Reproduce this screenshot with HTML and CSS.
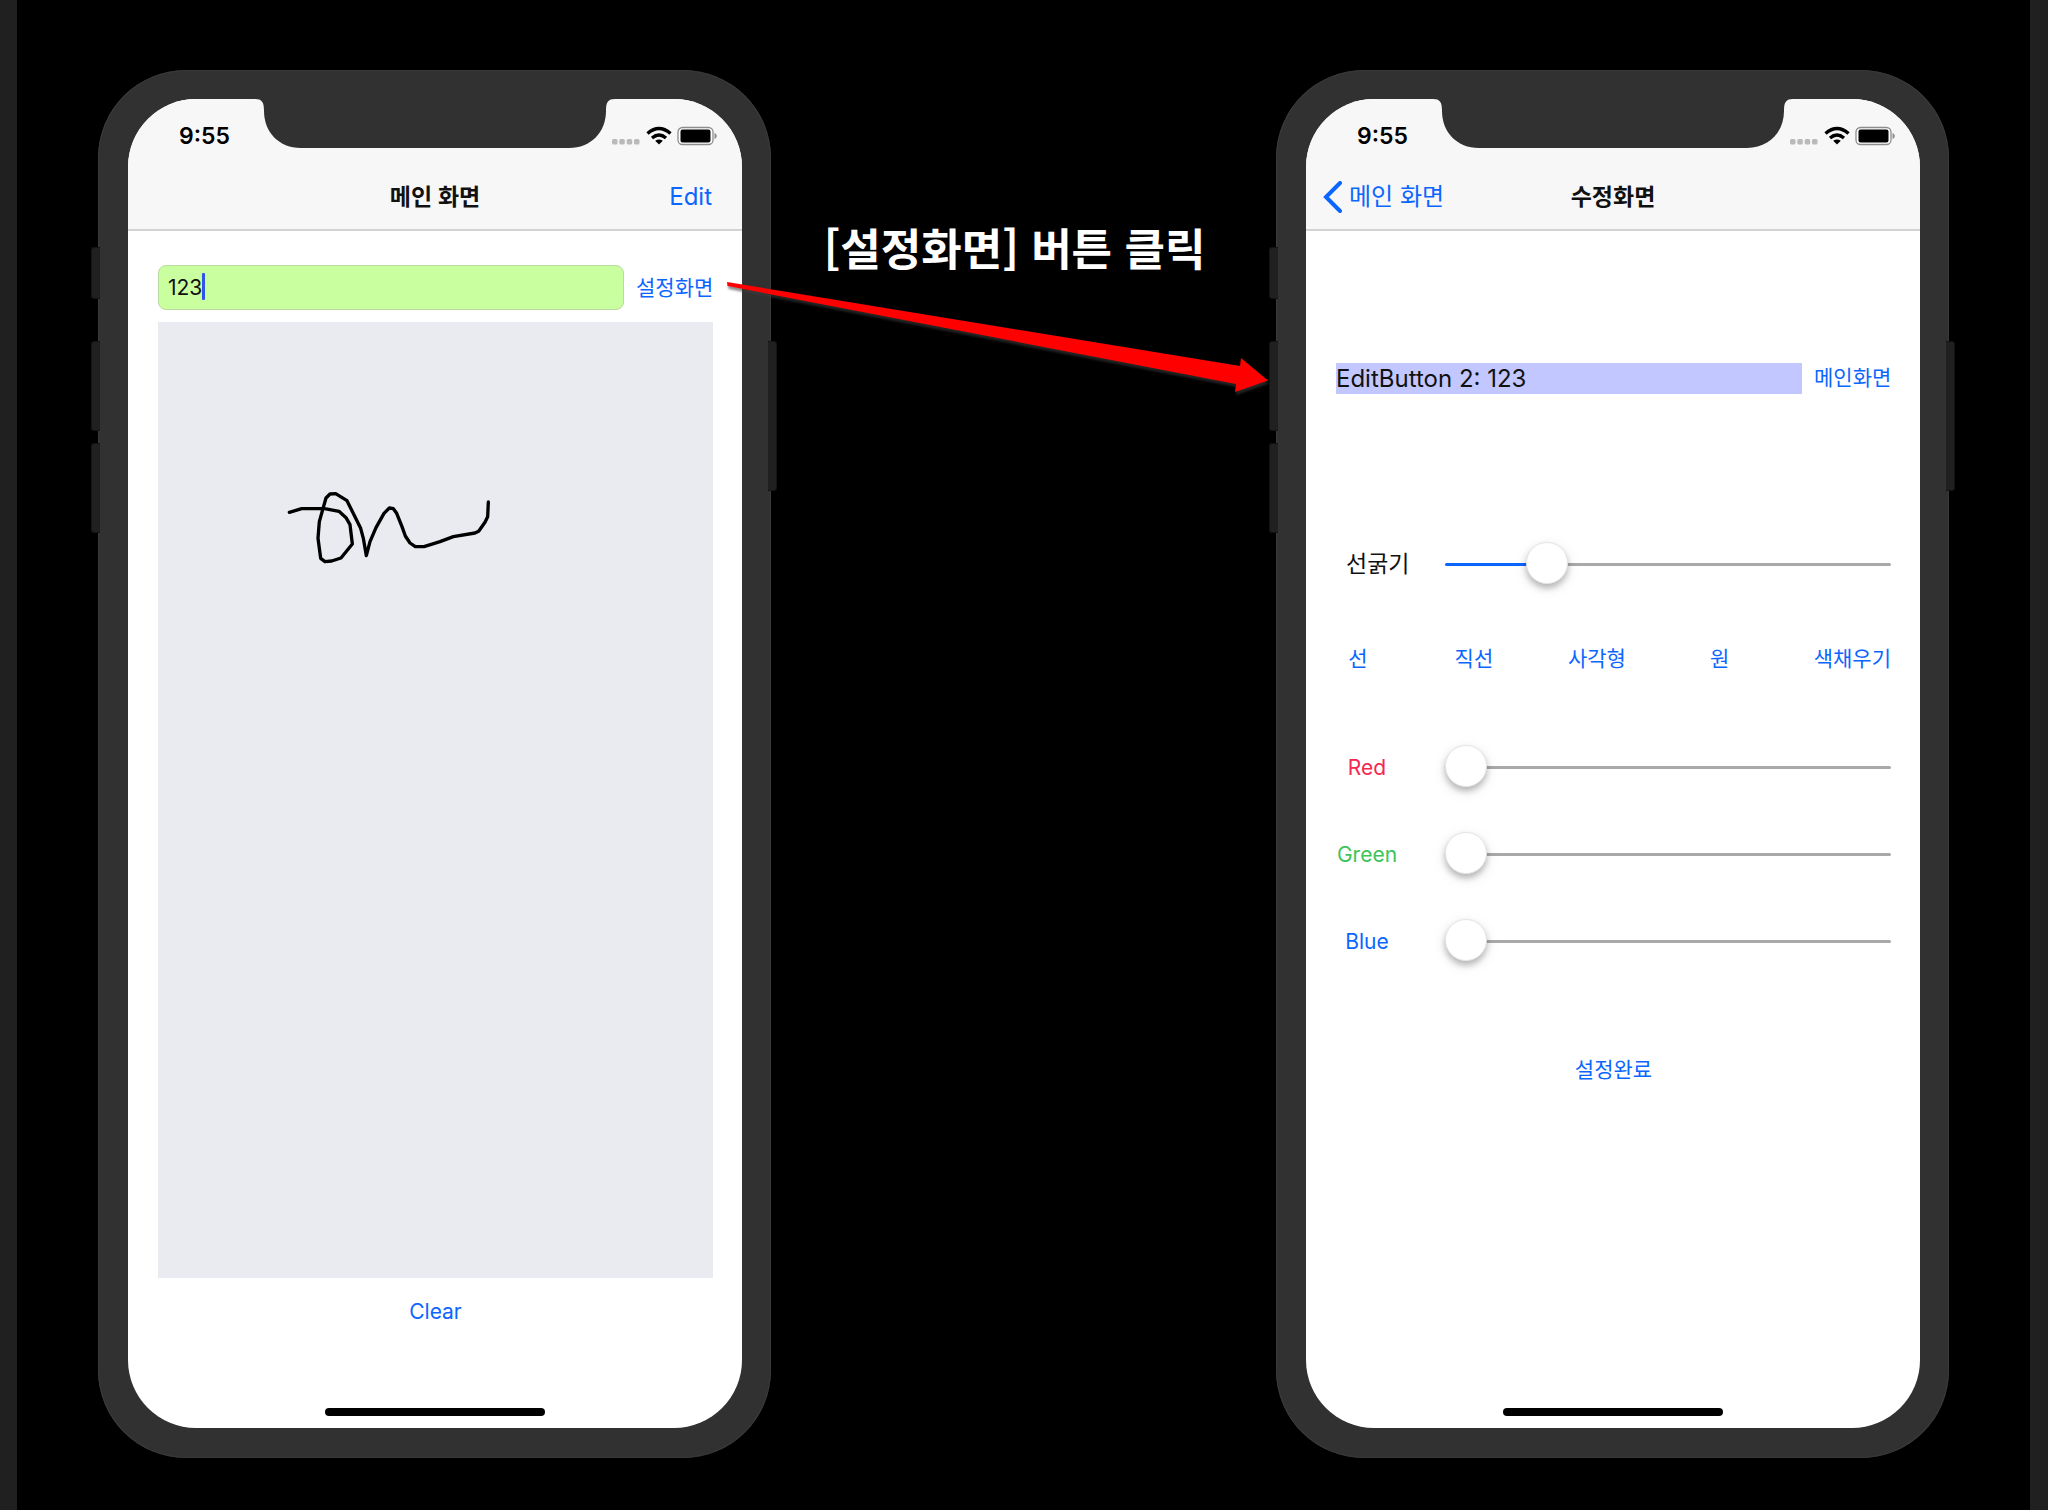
FILE: index.html
```html
<!DOCTYPE html>
<html lang="ko">
<head>
<meta charset="utf-8">
<meta name="viewport" content="width=device-width, initial-scale=1">
<title>메인 화면 / 수정화면</title>
<link rel="stylesheet" href="styles.css">
</head>
<body>
<svg class="symbols" aria-hidden="true">
  <symbol id="notch" viewBox="0 0 360 49">
    <path d="M0 0C7 0 9 3 9 12C9 33 24 49 46 49H314C336 49 351 33 351 12C351 3 353 0 360 0Z" fill="#313131"/>
  </symbol>
  <symbol id="status" viewBox="0 0 106 20">
    <g fill="#bababa">
      <rect x="0" y="13" width="5.500" height="5.500" rx="1.500"/><rect x="7.300" y="13" width="5.500" height="5.500" rx="1.500"/>
      <rect x="14.700" y="13" width="5.500" height="5.500" rx="1.500"/><rect x="22" y="13" width="5.500" height="5.500" rx="1.500"/>
    </g>
    <path d="M35.500 7.500Q47 -2.500 58.500 7.500M40 12Q47 6 54 12" fill="none" stroke="#000" stroke-width="3.400"/>
    <path d="M43.200 14.800Q47 12 50.800 14.800L47 18.600Z"/>
    <rect x="66" y="1.500" width="35" height="17" rx="4.500" fill="#fff" stroke="#8d8d8d" stroke-width="1.300"/>
    <rect x="68.500" y="3.500" width="30" height="13" rx="2"/>
    <path d="M102.500 7C105.500 8 105.500 12 102.500 13Z" fill="#8d8d8d"/>
  </symbol>
</svg>

<main class="stage">
  <section class="phone" aria-label="메인 화면">
    <span class="key key-mute"></span><span class="key key-up"></span><span class="key key-down"></span><span class="key key-power"></span>
    <div class="screen">
      <svg class="notch" aria-hidden="true"><use href="#notch"/></svg>
      <header class="top">
        <div class="status"><span class="time">9:55</span><svg class="status-icons" aria-hidden="true"><use href="#status"/></svg></div>
        <nav class="nav">
          <span></span>
          <h1 class="nav-title">메인 화면</h1>
          <button class="nav-button" type="button">Edit</button>
        </nav>
      </header>
      <div class="draw">
        <div class="field-row">
          <div class="field">
            <input class="field-input" type="text" value="123" aria-label="메시지">
            <span class="caret"></span>
          </div>
          <button class="link" type="button">설정화면</button>
        </div>
        <div class="canvas">
          <svg class="sketch" viewBox="0 0 720 330" aria-hidden="true">
            <path d="M58 127L95 116L160 115L207 124L228 143L240 164L247 222L213 264L185 273L165 275L152 265L144 205L148 155L160 112L168 84L180 72L197 71L231 92L272 175L280 205L289 257L300 215L318 173L342 130L358 114L370 116L380 130L396 170L406 198L420 219L436 230L462 230L510 215L550 200L615 189L626 184L645 157L653 140L655 96" fill="none" stroke="#000" stroke-width="10" stroke-linecap="round" stroke-linejoin="round"/>
          </svg>
        </div>
        <button class="link clear" type="button">Clear</button>
      </div>
      <span class="home"></span>
    </div>
  </section>

  <div class="step">
    <p class="caption">[설정화면] 버튼 클릭</p>
    <svg class="arrow" viewBox="0 0 551 125" aria-hidden="true">
      <path d="M5 7L518 91L519 83L546 105.500L513 117L514 109L5.500 11Z" fill="#f00"/>
    </svg>
  </div>

  <section class="phone" aria-label="수정화면">
    <span class="key key-mute"></span><span class="key key-up"></span><span class="key key-down"></span><span class="key key-power"></span>
    <div class="screen">
      <svg class="notch" aria-hidden="true"><use href="#notch"/></svg>
      <header class="top">
        <div class="status"><span class="time">9:55</span><svg class="status-icons" aria-hidden="true"><use href="#status"/></svg></div>
        <nav class="nav">
          <button class="nav-back" type="button">
            <svg class="chevron" viewBox="0 0 20 32" aria-hidden="true"><path d="M17 2L3 16L17 30" fill="none" stroke="currentColor" stroke-width="4" stroke-linecap="round"/></svg>
            메인 화면
          </button>
          <h1 class="nav-title">수정화면</h1>
          <span></span>
        </nav>
      </header>
      <div class="settings">
        <div class="message-row">
          <p class="message">EditButton 2: 123</p>
          <button class="link" type="button">메인화면</button>
        </div>
        <div class="slider-row width-row">
          <label class="width-label" for="width">선굵기</label>
          <input class="slider" id="width" type="range" min="0" max="100" value="20" style="--fill: 20%">
        </div>
        <div class="tools">
          <button class="link" type="button">선</button>
          <button class="link" type="button">직선</button>
          <button class="link" type="button">사각형</button>
          <button class="link" type="button">원</button>
          <button class="link" type="button">색채우기</button>
        </div>
        <div class="colors">
          <div class="slider-row">
            <label class="color-label red" for="red">Red</label>
            <input class="slider" id="red" type="range" min="0" max="255" value="0">
          </div>
          <div class="slider-row">
            <label class="color-label green" for="green">Green</label>
            <input class="slider" id="green" type="range" min="0" max="255" value="0">
          </div>
          <div class="slider-row">
            <label class="color-label blue" for="blue">Blue</label>
            <input class="slider" id="blue" type="range" min="0" max="255" value="0">
          </div>
        </div>
        <button class="link done" type="button">설정완료</button>
      </div>
      <span class="home"></span>
    </div>
  </section>
</main>
</body>
</html>
```
FILE: styles.css
```css
:root {
  --blue: #0b66ff;
  --case: #313131;
}

* {
  box-sizing: border-box;
}

body {
  margin: 0;
  background: #000;
  font-family: Inter, "Noto Sans CJK KR", sans-serif;
  font-size: 21px;
  color: #111;
}

h1,
p {
  margin: 0;
}

button {
  padding: 0;
  border: 0;
  background: none;
  font: inherit;
  color: var(--blue);
  white-space: nowrap;
}

.symbols {
  position: absolute;
  width: 0;
  height: 0;
}

.stage {
  display: grid;
  grid-template-columns: minmax(0, 673fr) minmax(0, 505fr) minmax(0, 673fr);
  align-items: start;
  min-height: 100vh;
  padding: 70px 81px 52px;
  border: solid #202020;
  border-width: 0 18px 0 17px;
}

/* Phone case */
.phone {
  position: relative;
  display: flex;
  aspect-ratio: 673 / 1388;
  padding: 29px 29px 30px 30px;
  border-radius: 88px;
  background: var(--case);
  box-shadow: inset 0 0 0 1px #3a3a3a;
}

.key {
  position: absolute;
  left: -7px;
  width: 9px;
  height: 90px;
  border: 1px solid #141414;
  border-right: 0;
  border-radius: 3px 0 0 3px;
  background: #202020;
}

.key-mute {
  top: 177px;
  height: 52px;
}

.key-up {
  top: 271px;
}

.key-down {
  top: 373px;
}

.key-power {
  top: 271px;
  right: -6px;
  left: auto;
  height: 150px;
  border: 1px solid #141414;
  border-left: 0;
  border-radius: 0 3px 3px 0;
}

.screen {
  position: relative;
  flex: 1;
  display: flex;
  flex-direction: column;
  min-width: 0;
  overflow: hidden;
  border-radius: 68px;
  background: #fff;
}

.notch {
  position: absolute;
  top: 0;
  left: 50%;
  width: 360px;
  height: 49px;
  margin-left: -180px;
}

.home {
  align-self: center;
  width: 220px;
  height: 8px;
  margin-bottom: 12px;
  border-radius: 4px;
  background: #000;
}

/* Status and navigation bars */
.top {
  border-bottom: 2px solid #d3d3d3;
  background: #f7f7f7;
}

.status {
  display: flex;
  justify-content: space-between;
  align-items: center;
  height: 65px;
  padding: 9px 24px 0 51px;
}

.time {
  font-size: 23px;
  font-weight: 600;
  color: #000;
}

.status-icons {
  width: 106px;
  height: 20px;
}

.nav {
  display: grid;
  grid-template-columns: 1fr auto 1fr;
  align-items: center;
  height: 65px;
  padding: 0 30px;
  font-size: 24px;
}

.nav-title {
  font-size: 23px;
  font-weight: 600;
  line-height: 32px;
}

.nav-button {
  justify-self: end;
}

.nav-back {
  display: flex;
  align-items: center;
  gap: 6px;
  margin-left: -13px;
  line-height: 32px;
}

.chevron {
  width: 20px;
  height: 32px;
}

/* Drawing screen */
.draw {
  flex: 1;
  display: flex;
  flex-direction: column;
  gap: 12px;
  padding: 34px 29px 74px 30px;
}

.field-row,
.message-row {
  display: grid;
  grid-template-columns: 1fr 77px;
  gap: 12px;
  align-items: center;
}

.field {
  position: relative;
}

.field-input {
  display: block;
  width: 100%;
  height: 45px;
  padding: 0 9px;
  border: 1px solid #b9dba0;
  border-radius: 8px;
  background: #c9ff9f;
  font: inherit;
  color: #111;
}

.caret {
  position: absolute;
  top: 8px;
  left: 44px;
  width: 3px;
  height: 27px;
  border-radius: 1px;
  background: #2f55e8;
}

.canvas {
  flex: 1;
  padding: 148px 0 0 112px;
  background: #eaebf0;
}

.sketch {
  display: block;
  width: 240px;
  height: 110px;
}

.link {
  min-width: 44px;
  height: 44px;
  line-height: 32px;
}

.clear,
.done {
  align-self: center;
}

/* Settings screen */
.settings {
  flex: 1;
  display: flex;
  flex-direction: column;
  padding: 125px 29px 0 30px;
}

.message {
  height: 31px;
  background: #c2c8ff;
  font-size: 24px;
  line-height: 31px;
}

.slider-row {
  display: grid;
  grid-template-columns: 109px 1fr;
  align-items: center;
  height: 46px;
}

.width-row {
  margin-top: 141px;
}

.width-label {
  padding-left: 10px;
  font-size: 23px;
  line-height: 32px;
}

.tools {
  display: flex;
  justify-content: space-between;
  margin-top: 50px;
}

.colors {
  display: grid;
  gap: 41px;
  margin: 63px 0 84px;
}

.color-label {
  width: 62px;
  text-align: center;
}

.red {
  color: #f5264f;
}

.green {
  color: #3cc45a;
}

.blue {
  color: var(--blue);
}

.slider {
  --fill: 0%;
  width: 100%;
  height: 42px;
  margin: 0;
  appearance: none;
  background: none;
}

.slider::-webkit-slider-runnable-track {
  height: 3px;
  border-radius: 2px;
  background: linear-gradient(to right, var(--blue) var(--fill), #a9a9a9 var(--fill));
}

.slider::-webkit-slider-thumb {
  width: 42px;
  height: 42px;
  margin-top: -21px;
  border: 1px solid #e6e6e6;
  border-radius: 50%;
  appearance: none;
  background: #fff;
  box-shadow: 0 4px 6px rgba(0, 0, 0, 0.25), 0 4px 16px rgba(0, 0, 0, 0.08);
}

/* Step between the two screens */
.step {
  position: relative;
  padding: 144px 18px 0 0;
}

.caption {
  font-family: "Noto Sans CJK KR", sans-serif;
  font-size: 44px;
  font-weight: 700;
  line-height: 66px;
  text-align: center;
  white-space: nowrap;
  color: #fff;
}

.arrow {
  position: absolute;
  z-index: 1;
  top: 205px;
  left: -49px;
  width: calc(100% + 46px);
  filter: drop-shadow(1px 3px 1px rgba(60, 60, 60, 0.6));
}
```
